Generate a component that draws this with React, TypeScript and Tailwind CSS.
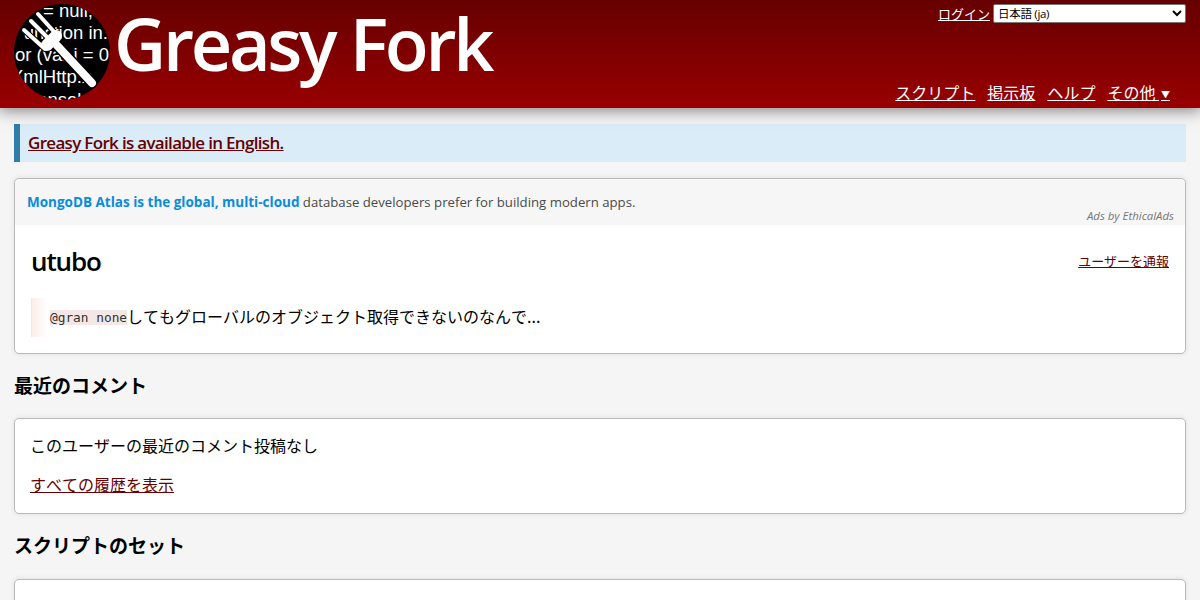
function Logo() {
  return (
    <svg width="96" height="96" viewBox="0 0 96 96" className="shrink-0">
      <defs>
        <clipPath id="logo-circle">
          <circle cx="48" cy="48" r="48" />
        </clipPath>
      </defs>
      <circle cx="48" cy="48" r="48" fill="#000" />
      <g clipPath="url(#logo-circle)" fill="#fff" fontFamily="'Liberation Sans', sans-serif" fontSize="18.5">
        <text x="29" y="13">= null,</text>
        <text x="94" y="35" textAnchor="end">unction in.</text>
        <text x="1" y="57">or (var i = 0</text>
        <text x="-3" y="79">XmlHttp.x</text>
        <text x="14" y="102">console.log</text>
      </g>
      {/* dark halo keeps the code away from the fork */}
      <g stroke="#000" fill="none" strokeLinecap="round">
        <path d="M38 36 L78 79" strokeWidth="11" />
        <path d="M10 26 L31 45" strokeWidth="6" />
        <path d="M17 17 L37 37" strokeWidth="6" />
        <path d="M24 10 L43 31" strokeWidth="6" />
      </g>
      <g stroke="#fff" fill="none" strokeLinecap="round">
        <path d="M38 36 L78 79" strokeWidth="8" />
        <path d="M10 26 L31 45" strokeWidth="4" />
        <path d="M17 17 L37 37" strokeWidth="4" />
        <path d="M24 10 L43 31" strokeWidth="4" />
        <path d="M33 41 L42 32" strokeWidth="12" />
      </g>
    </svg>
  );
}

function Card({ children, className = '' }: { children: React.ReactNode; className?: string }) {
  return (
    <div className={`bg-white border border-[#bbb] rounded-[5px] shadow-[0_0_5px_#ddd] ${className}`}>
      {children}
    </div>
  );
}

export default function App() {
  return (
    <div className="h-[600px] overflow-hidden bg-[#f5f5f5] text-black font-['Open_Sans','Noto_Sans_CJK_JP',sans-serif] text-base">
      {/* header */}
      <header className="h-[108px] bg-gradient-to-b from-[#670000] to-[#990000] shadow-[0_0_15px_2px_rgba(0,0,0,0.5)] flex justify-between px-[14px] relative">
        <div className="flex items-start pt-[4px]">
          <Logo />
          <div className="font-['Open_Sans','Noto_Sans',sans-serif] text-white text-[72px] leading-[78px] font-semibold tracking-[-3.3px] ml-[4px]">Greasy Fork</div>
        </div>
        <div className="flex flex-col items-end justify-between pt-[4px] pb-[1px]">
          <div className="flex items-center gap-[3px] font-['Noto_Sans_CJK_JP',sans-serif] text-[13px] leading-[17px]">
            <a className="text-white underline">ログイン</a>
            <select className="w-[193px] h-[19px] bg-white border border-[#767676] rounded-[2px] text-[11.5px] tracking-[-0.3px] text-black font-['Open_Sans','Noto_Sans_CJK_JP',sans-serif] appearance-auto">
              <option>日本語 (ja)</option>
            </select>
          </div>
          <nav className="flex gap-3 pr-[16px] font-['Noto_Sans_CJK_JP',sans-serif] text-base text-white leading-[24px]">
            <a className="underline">スクリプト</a>
            <a className="underline">掲示板</a>
            <a className="underline">ヘルプ</a>
            <a className="underline">その他 <span className="text-[9px] align-[1px] ml-[2px]">▼</span></a>
          </nav>
        </div>
      </header>

      <main className="px-[14px]">
        {/* locale notice */}
        <div className="mt-4 h-[38px] bg-[#d9ecf7] border-l-[6px] border-[#2f7ea8] pl-2 flex items-center">
          <a className="text-[#670000] underline font-semibold text-[17px] tracking-[-0.68px]">Greasy Fork is available in English.</a>
        </div>

        {/* user card */}
        <Card className="mt-4 h-[176px]">
          <div className="h-[46px] bg-[#f6f6f6] rounded-t-[5px] pl-[12px] pr-3 relative">
            <div className="pt-[14px] text-[13.2px] leading-[18px] text-[#4a4a4a]">
              <span className="text-[#088cdb] font-bold text-[13.5px]">MongoDB Atlas is the global, multi-cloud</span> database developers prefer for building modern apps.
            </div>
            <div className="absolute right-[11px] bottom-[2px] text-[11.4px] leading-[14px] italic text-[#777]">Ads by EthicalAds</div>
          </div>
          <div className="px-4">
            <div className="flex justify-between items-center mt-[16px] h-[42px]">
              <h2 className="text-[26px] tracking-[-1.1px] font-semibold mb-[2px]">utubo</h2>
              <a className="text-[#670000] underline text-[13px] font-['Noto_Sans_CJK_JP',sans-serif] mb-[2px]">ユーザーを通報</a>
            </div>
            <div className="mt-[15px] h-[39px] border-l-[1px] border-[#f5e6e3] bg-gradient-to-r from-[#fbeeeb] to-white bg-[length:16px_100%] bg-no-repeat pl-[18px] pb-[3px] flex items-center">
              <code className="font-['DejaVu_Sans_Mono',monospace] text-[12.8px] leading-[15px] mt-[3px] bg-[#f4e8e6] text-[#333]">@gran none</code>
              <span className="font-['Noto_Sans_CJK_JP',sans-serif] [font-kerning:none]">してもグローバルのオブジェクト取得できないのなんで...</span>
            </div>
          </div>
        </Card>

        <h3 className="mt-[16px] text-[19px] font-bold leading-[30px] font-['Noto_Sans_CJK_JP',sans-serif]">最近のコメント</h3>

        <Card className="mt-[18px] h-[96px] pl-[16px] pr-4 font-['Noto_Sans_CJK_JP',sans-serif] [font-kerning:none]">
          <p className="pt-[14px] leading-[24px] -ml-px">このユーザーの最近のコメント投稿なし</p>
          <p className="mt-[15px] leading-[24px] -ml-px"><a className="text-[#670000] underline">すべての履歴を表示</a></p>
        </Card>

        <h3 className="mt-[16px] text-[19px] font-bold leading-[30px] font-['Noto_Sans_CJK_JP',sans-serif]">スクリプトのセット</h3>

        <Card className="mt-[19px] h-[60px]">
          <div />
        </Card>
      </main>
    </div>
  );
}
